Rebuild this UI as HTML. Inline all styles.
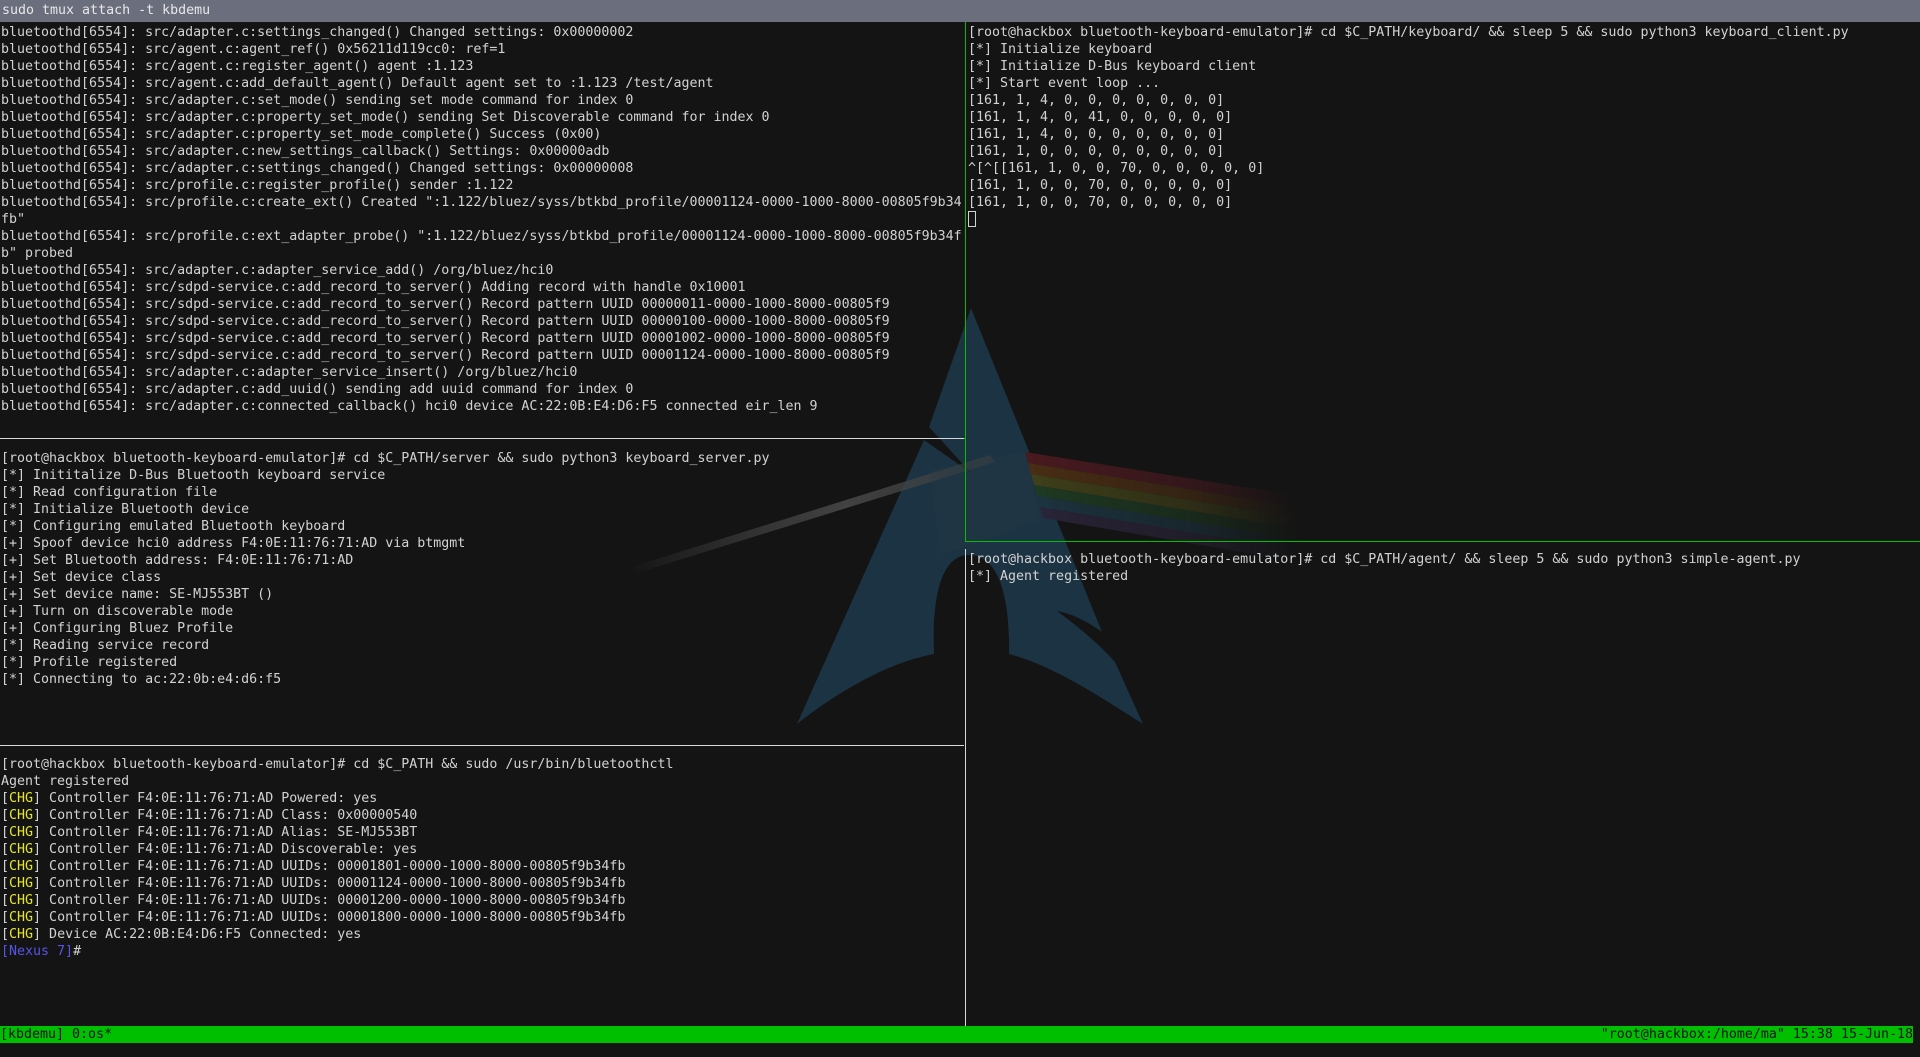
<!DOCTYPE html>
<html><head><meta charset="utf-8"><style>
html,body{margin:0;padding:0;width:1920px;height:1057px;overflow:hidden;background:#141414;}
.t{position:absolute;margin:0;font-family:"DejaVu Sans Mono","Liberation Mono",monospace;font-size:13.3px;line-height:17px;color:#d2d2d2;white-space:pre;overflow:hidden;z-index:2;}
#title{position:absolute;left:0;top:0;width:1920px;height:22px;background:#6b6e7d;color:#e8e8e8;font-family:"DejaVu Sans Mono","Liberation Mono",monospace;font-size:13.3px;line-height:22px;padding-left:2px;box-sizing:border-box;}
.ln{position:absolute;z-index:3;}
.y{color:#e6e62a}.b{color:#5555e8}
#status{position:absolute;left:0;top:1026px;width:1913px;height:17px;background:#00bf00;color:#141414;font-family:"DejaVu Sans Mono","Liberation Mono",monospace;font-size:13.3px;line-height:17px;white-space:pre;z-index:3;}
</style></head><body>
<div id="title">sudo tmux attach -t kbdemu</div>
<svg width="1920" height="1057" style="position:absolute;left:0;top:0;z-index:1">
<defs>
<linearGradient id="beam" x1="625" y1="569" x2="990" y2="455" gradientUnits="userSpaceOnUse">
<stop offset="0" stop-color="#555" stop-opacity="0"/><stop offset="0.6" stop-color="#474747" stop-opacity="0.9"/><stop offset="1" stop-color="#444" stop-opacity="0.5"/></linearGradient>
<linearGradient id="fade" x1="1020" y1="0" x2="1300" y2="0" gradientUnits="userSpaceOnUse">
<stop offset="0" stop-color="#fff" stop-opacity="1"/><stop offset="0.6" stop-color="#fff" stop-opacity="0.6"/><stop offset="1" stop-color="#fff" stop-opacity="0"/></linearGradient>
<mask id="m"><rect x="0" y="0" width="1920" height="1057" fill="url(#fade)"/></mask>
</defs>
<path d="M971,308 L1102,632 C1085,620 1072,614 1057,611 C1080,628 1100,645 1115,662 L1143,724 C1090,690 1050,665 1009,654 C1010,600 1000,555 969,555 C940,555 932,600 934,654 C890,662 840,690 797,724 L924,440 L971,473 L929,427 Z" fill="#1b3342"/>
<polygon points="625,569 990,455 995,462 640,572" fill="url(#beam)"/>
<polygon points="930,470 1025,452 1040,520 940,555" fill="#2a3a44" opacity="0.35"/>
<g mask="url(#m)">
<polygon points="1025,452 1300,496 1300,507 1028,463" fill="#4a1a20"/>
<polygon points="1028,463 1300,507 1300,518 1031,474" fill="#4a2e14"/>
<polygon points="1031,474 1300,518 1300,529 1034,485" fill="#40401a"/>
<polygon points="1034,485 1300,529 1300,540 1037,496" fill="#1e3a22"/>
<polygon points="1037,496 1300,540 1300,551 1040,507" fill="#1c3440"/>
<polygon points="1040,507 1300,551 1300,562 1043,518" fill="#2a2438"/>
</g>
</svg>
<div class="ln" style="left:0;top:438px;width:964px;height:1px;background:#d8d8d8"></div>
<div class="ln" style="left:0;top:745px;width:964px;height:1px;background:#d8d8d8"></div>
<div class="ln" style="left:965px;top:22px;width:1px;height:519px;background:#00c000"></div>
<div class="ln" style="left:965px;top:541px;width:955px;height:1px;background:#00c000"></div>
<div class="ln" style="left:965px;top:549px;width:1px;height:477px;background:#d8d8d8"></div>
<div class="ln" style="left:964px;top:438px;width:1px;height:1px;background:#00c000"></div>

<pre class="t" style="left:1px;top:24px;width:962px;height:408px">bluetoothd[6554]: src/adapter.c:settings_changed() Changed settings: 0x00000002
bluetoothd[6554]: src/agent.c:agent_ref() 0x56211d119cc0: ref=1
bluetoothd[6554]: src/agent.c:register_agent() agent :1.123
bluetoothd[6554]: src/agent.c:add_default_agent() Default agent set to :1.123 /test/agent
bluetoothd[6554]: src/adapter.c:set_mode() sending set mode command for index 0
bluetoothd[6554]: src/adapter.c:property_set_mode() sending Set Discoverable command for index 0
bluetoothd[6554]: src/adapter.c:property_set_mode_complete() Success (0x00)
bluetoothd[6554]: src/adapter.c:new_settings_callback() Settings: 0x00000adb
bluetoothd[6554]: src/adapter.c:settings_changed() Changed settings: 0x00000008
bluetoothd[6554]: src/profile.c:register_profile() sender :1.122
bluetoothd[6554]: src/profile.c:create_ext() Created ":1.122/bluez/syss/btkbd_profile/00001124-0000-1000-8000-00805f9b34
fb"
bluetoothd[6554]: src/profile.c:ext_adapter_probe() ":1.122/bluez/syss/btkbd_profile/00001124-0000-1000-8000-00805f9b34f
b" probed
bluetoothd[6554]: src/adapter.c:adapter_service_add() /org/bluez/hci0
bluetoothd[6554]: src/sdpd-service.c:add_record_to_server() Adding record with handle 0x10001
bluetoothd[6554]: src/sdpd-service.c:add_record_to_server() Record pattern UUID 00000011-0000-1000-8000-00805f9
bluetoothd[6554]: src/sdpd-service.c:add_record_to_server() Record pattern UUID 00000100-0000-1000-8000-00805f9
bluetoothd[6554]: src/sdpd-service.c:add_record_to_server() Record pattern UUID 00001002-0000-1000-8000-00805f9
bluetoothd[6554]: src/sdpd-service.c:add_record_to_server() Record pattern UUID 00001124-0000-1000-8000-00805f9
bluetoothd[6554]: src/adapter.c:adapter_service_insert() /org/bluez/hci0
bluetoothd[6554]: src/adapter.c:add_uuid() sending add uuid command for index 0
bluetoothd[6554]: src/adapter.c:connected_callback() hci0 device AC:22:0B:E4:D6:F5 connected eir_len 9</pre>

<pre class="t" style="left:1px;top:450px;width:962px;height:289px">[root@hackbox bluetooth-keyboard-emulator]# cd $C_PATH/server &amp;&amp; sudo python3 keyboard_server.py
[*] Inititalize D-Bus Bluetooth keyboard service
[*] Read configuration file
[*] Initialize Bluetooth device
[*] Configuring emulated Bluetooth keyboard
[+] Spoof device hci0 address F4:0E:11:76:71:AD via btmgmt
[+] Set Bluetooth address: F4:0E:11:76:71:AD
[+] Set device class
[+] Set device name: SE-MJ553BT ()
[+] Turn on discoverable mode
[+] Configuring Bluez Profile
[*] Reading service record
[*] Profile registered
[*] Connecting to ac:22:0b:e4:d6:f5</pre>

<pre class="t" style="left:1px;top:756px;width:962px;height:270px">[root@hackbox bluetooth-keyboard-emulator]# cd $C_PATH &amp;&amp; sudo /usr/bin/bluetoothctl
Agent registered
[<span class="y">CHG</span>] Controller F4:0E:11:76:71:AD Powered: yes
[<span class="y">CHG</span>] Controller F4:0E:11:76:71:AD Class: 0x00000540
[<span class="y">CHG</span>] Controller F4:0E:11:76:71:AD Alias: SE-MJ553BT
[<span class="y">CHG</span>] Controller F4:0E:11:76:71:AD Discoverable: yes
[<span class="y">CHG</span>] Controller F4:0E:11:76:71:AD UUIDs: 00001801-0000-1000-8000-00805f9b34fb
[<span class="y">CHG</span>] Controller F4:0E:11:76:71:AD UUIDs: 00001124-0000-1000-8000-00805f9b34fb
[<span class="y">CHG</span>] Controller F4:0E:11:76:71:AD UUIDs: 00001200-0000-1000-8000-00805f9b34fb
[<span class="y">CHG</span>] Controller F4:0E:11:76:71:AD UUIDs: 00001800-0000-1000-8000-00805f9b34fb
[<span class="y">CHG</span>] Device AC:22:0B:E4:D6:F5 Connected: yes
<span class="b">[Nexus 7]</span>#</pre>

<pre class="t" style="left:968px;top:24px;width:952px;height:508px">[root@hackbox bluetooth-keyboard-emulator]# cd $C_PATH/keyboard/ &amp;&amp; sleep 5 &amp;&amp; sudo python3 keyboard_client.py
[*] Initialize keyboard
[*] Initialize D-Bus keyboard client
[*] Start event loop ...
[161, 1, 4, 0, 0, 0, 0, 0, 0, 0]
[161, 1, 4, 0, 41, 0, 0, 0, 0, 0]
[161, 1, 4, 0, 0, 0, 0, 0, 0, 0]
[161, 1, 0, 0, 0, 0, 0, 0, 0, 0]
^[^[[161, 1, 0, 0, 70, 0, 0, 0, 0, 0]
[161, 1, 0, 0, 70, 0, 0, 0, 0, 0]
[161, 1, 0, 0, 70, 0, 0, 0, 0, 0]
</pre>
<div class="ln" style="left:968px;top:211px;width:8px;height:16px;box-sizing:border-box;border:1px solid #d2d2d2"></div>

<pre class="t" style="left:968px;top:551px;width:952px;height:475px">[root@hackbox bluetooth-keyboard-emulator]# cd $C_PATH/agent/ &amp;&amp; sleep 5 &amp;&amp; sudo python3 simple-agent.py
[*] Agent registered</pre>

<div id="status">[kbdemu] 0:os*</div>
<div style="position:absolute;top:1026px;right:7px;height:17px;color:#141414;font-family:'DejaVu Sans Mono','Liberation Mono',monospace;font-size:13.3px;line-height:17px;white-space:pre;z-index:4">"root@hackbox:/home/ma" 15:38 15-Jun-18</div>
</body></html>
